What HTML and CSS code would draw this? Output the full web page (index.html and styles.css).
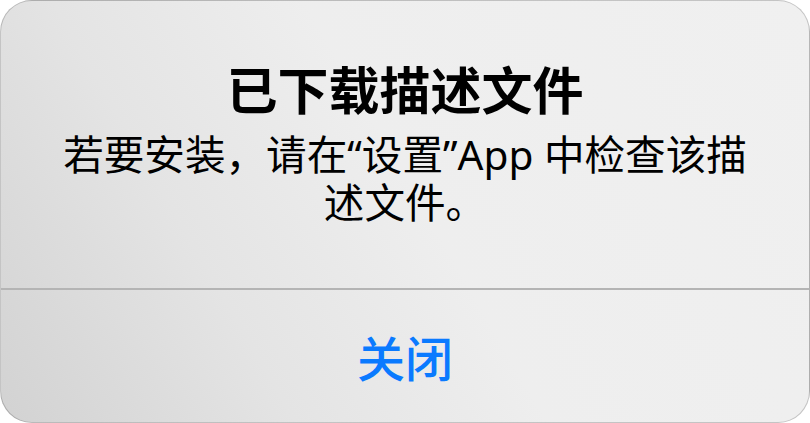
FILE: index.html
```html
<!DOCTYPE html>
<html lang="zh-CN">
<head>
<meta charset="utf-8">
<link rel="stylesheet" href="styles.css">
</head>
<body>
<div class="alert">
  <div class="content">
    <h1 class="title">已下载描述文件</h1>
    <p class="message">若要安装，请在“设置”App 中检查该描<br>述文件。</p>
  </div>
  <div class="actions">
    <button class="action">关闭</button>
  </div>
</div>
</body>
</html>
```
FILE: styles.css
```css
html, body {
  margin: 0;
  padding: 0;
  background: #ffffff;
}
body {
  width: 810px;
  height: 423px;
  overflow: hidden;
  font-family: "Noto Sans CJK SC", "Noto Sans", sans-serif;
}
.alert {
  box-sizing: border-box;
  width: 810px;
  height: 423px;
  border-radius: 32px;
  border: 1px solid rgba(0, 0, 0, 0.18);
  background: linear-gradient(60deg, #d2d2d2 0%, #e4e4e4 28%, #eeeeee 52%, #f0f0f0 100%);
  display: flex;
  flex-direction: column;
  overflow: hidden;
}
.content {
  height: 289px;
  box-sizing: border-box;
  padding-top: 57px;
  display: flex;
  flex-direction: column;
  align-items: center;
  border-bottom: 2px solid #b4b4b4;
}
.title {
  margin: 0;
  font-size: 51px;
  line-height: 60px;
  font-weight: 700;
  color: #000;
}
.message {
  margin: 13px 0 0;
  font-family: "Noto Sans", "Noto Sans CJK SC", sans-serif;
  font-size: 40.6px;
  line-height: 48px;
  font-weight: 400;
  color: #000;
  text-align: center;
}
.actions {
  flex: 1;
  display: flex;
  align-items: center;
  justify-content: center;
}
.action {
  background: none;
  border: 0;
  padding: 0;
  font-family: inherit;
  font-size: 48px;
  font-weight: 500;
  color: #0a7aff;
  line-height: 60px;
}
```
